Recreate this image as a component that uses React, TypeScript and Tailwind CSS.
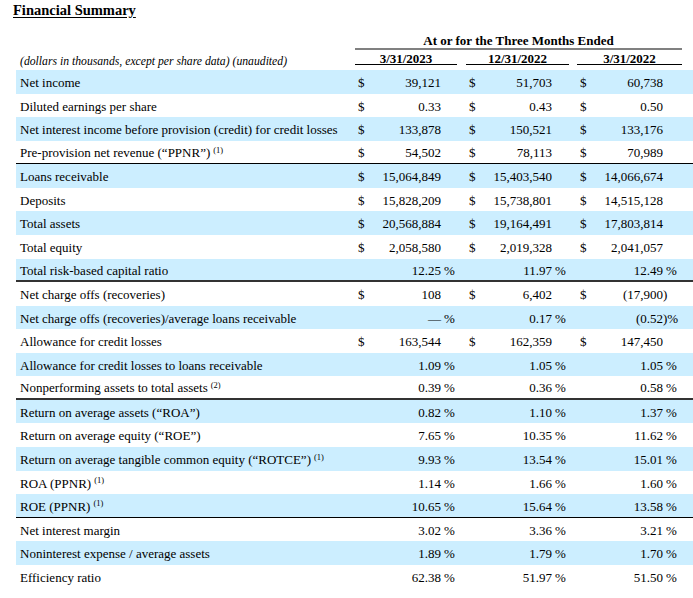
import React from "react";

type Cell = { d?: boolean; n: string; s?: string };
type Row = { label: string; sup?: string; cells: Cell[]; line?: "thin" | "thick" };

const m = (n: string): Cell => ({ d: true, n });
const p = (n: string): Cell => ({ n, s: "%" });

const rows: Row[] = [
  { label: "Net income", cells: [m("39,121"), m("51,703"), m("60,738")] },
  { label: "Diluted earnings per share", cells: [m("0.33"), m("0.43"), m("0.50")] },
  {
    label: "Net interest income before provision (credit) for credit losses",
    cells: [m("133,878"), m("150,521"), m("133,176")],
  },
  {
    label: "Pre-provision net revenue (\u201cPPNR\u201d)",
    sup: "(1)",
    cells: [m("54,502"), m("78,113"), m("70,989")],
    line: "thin",
  },
  { label: "Loans receivable", cells: [m("15,064,849"), m("15,403,540"), m("14,066,674")] },
  { label: "Deposits", cells: [m("15,828,209"), m("15,738,801"), m("14,515,128")] },
  { label: "Total assets", cells: [m("20,568,884"), m("19,164,491"), m("17,803,814")] },
  { label: "Total equity", cells: [m("2,058,580"), m("2,019,328"), m("2,041,057")] },
  { label: "Total risk-based capital ratio", cells: [p("12.25"), p("11.97"), p("12.49")], line: "thick" },
  { label: "Net charge offs (recoveries)", cells: [m("108"), m("6,402"), { d: true, n: "(17,900", s: ")" }] },
  {
    label: "Net charge offs (recoveries)/average loans receivable",
    cells: [p("\u2014"), p("0.17"), { n: "(0.52", s: ")%" }],
  },
  { label: "Allowance for credit losses", cells: [m("163,544"), m("162,359"), m("147,450")] },
  { label: "Allowance for credit losses to loans receivable", cells: [p("1.09"), p("1.05"), p("1.05")] },
  { label: "Nonperforming assets to total assets", sup: "(2)", cells: [p("0.39"), p("0.36"), p("0.58")], line: "thick" },
  { label: "Return on average assets (\u201cROA\u201d)", cells: [p("0.82"), p("1.10"), p("1.37")] },
  { label: "Return on average equity (\u201cROE\u201d)", cells: [p("7.65"), p("10.35"), p("11.62")] },
  {
    label: "Return on average tangible common equity (\u201cROTCE\u201d)",
    sup: "(1)",
    cells: [p("9.93"), p("13.54"), p("15.01")],
  },
  { label: "ROA (PPNR)", sup: "(1)", cells: [p("1.14"), p("1.66"), p("1.60")] },
  { label: "ROE (PPNR)", sup: "(1)", cells: [p("10.65"), p("15.64"), p("13.58")], line: "thin" },
  { label: "Net interest margin", cells: [p("3.02"), p("3.36"), p("3.21")] },
  { label: "Noninterest expense / average assets", cells: [p("1.89"), p("1.79"), p("1.70")] },
  { label: "Efficiency ratio", cells: [p("62.38"), p("51.97"), p("51.50")] },
];

const blockW = ["w-[111px]", "w-[111px]", "w-[105px]"];

function ValueCell({ cell, w }: { cell: Cell; w: string }) {
  return (
    <div className={`${w} flex items-center`}>
      <span className="w-[16px] pl-[3px]">{cell.d ? "$" : ""}</span>
      <span className="w-[70px] text-right">{cell.n}</span>
      <span className={cell.s === "%" ? "pl-[3px]" : ""}>{cell.s}</span>
    </div>
  );
}

export default function App() {
  return (
    <div className="w-[693px] h-[598px] overflow-hidden bg-white text-black font-['Liberation_Serif',serif] text-[13px]">
      <div className="pl-[13px] pt-[2px] text-[14.5px] leading-[16px] font-bold">
        <span className="underline underline-offset-[2px]">Financial Summary</span>
      </div>

      <div className="pl-[16px] mt-[15px]">
        <div className="flex">
          <div className="w-[339px]" />
          <div className="w-[327px] text-center font-bold leading-[15px] border-b-2 border-[#808080]">
            At or for the Three Months Ended
          </div>
        </div>

        <div className="flex h-[15px] mb-[5px]">
          <div className="w-[339px] pl-[4px] pt-[5px] italic text-[11.7px] leading-[13px] whitespace-nowrap">
            (dollars in thousands, except per share data) (unaudited)
          </div>
          {["3/31/2023", "12/31/2022", "3/31/2022"].map((h, i) => (
            <div key={h} className={blockW[i]}>
              <div
                className={`${i === 0 ? "w-[102px]" : i === 1 ? "w-[103px]" : "w-[105px]"} h-full pt-[2px] text-center font-bold leading-[13px] border-b border-black`}
              >
                {h}
              </div>
            </div>
          ))}
        </div>

        {rows.map((r, i) => (
          <div
            key={r.label}
            className={`flex h-[23.57px] items-center pt-[2px] ${i % 2 === 0 ? "bg-[#cceeff]" : "bg-white"} ${
              r.line === "thin" ? "border-b border-black" : r.line === "thick" ? "border-b-2 border-[#333333]" : ""
            }`}
          >
            <div className="w-[339px] pl-[4px] whitespace-nowrap">
              {r.label}
              {r.sup && <sup className="text-[8.5px] ml-[3px]">{r.sup}</sup>}
            </div>
            {r.cells.map((c, j) => (
              <ValueCell key={j} cell={c} w={blockW[j]} />
            ))}
          </div>
        ))}
      </div>
    </div>
  );
}
